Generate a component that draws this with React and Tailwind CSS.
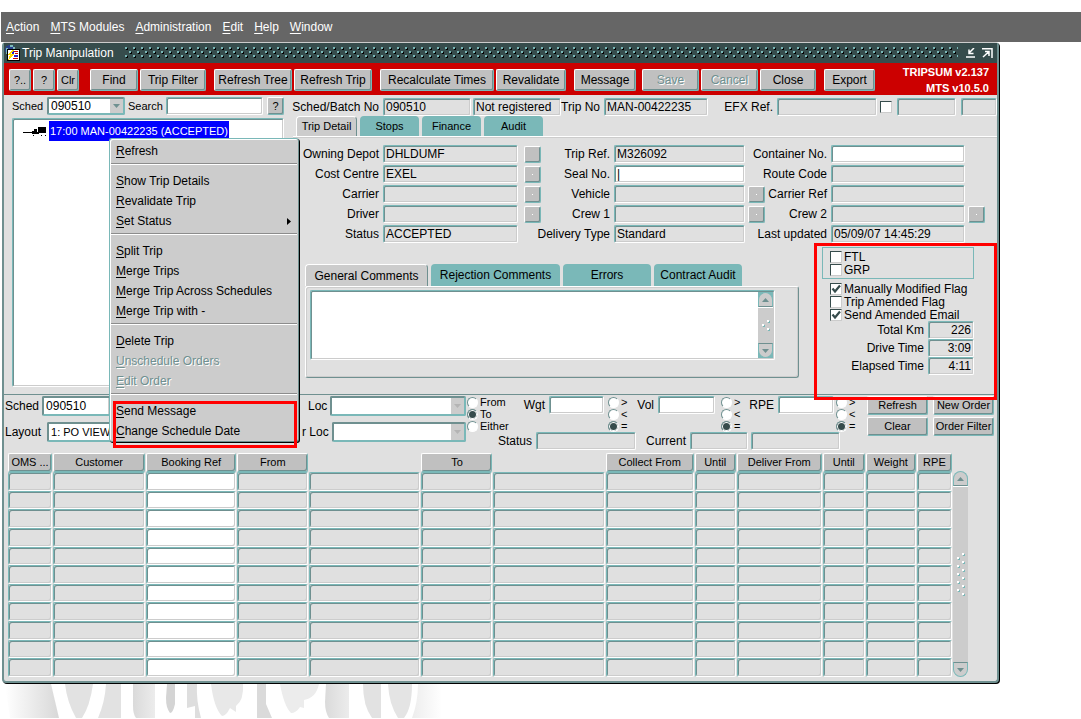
import { useId } from "react"

const MENUS = ["Action", "MTS Modules", "Administration", "Edit", "Help", "Window"]

const TOOLBAR = [
  { title: "?..", style: "w-[22px] text-[11px]" },
  { title: "?", style: "ml-[2px] w-[22px] text-[11px]" },
  { title: "Clr", style: "ml-[2px] w-[22px] text-[11px]" },
  { title: "Find", style: "ml-[11px] w-[48px] text-[12px]" },
  { title: "Trip Filter", style: "ml-[2px] w-[66px] text-[12px]" },
  { title: "Refresh Tree", style: "ml-2 w-[78px] text-[12px]" },
  { title: "Refresh Trip", style: "ml-[2px] w-[78px] text-[12px]" },
  { title: "Recalculate Times", style: "ml-2 w-[114px] text-[12px]" },
  { title: "Revalidate", style: "ml-[2px] w-[70px] text-[12px]" },
  { title: "Message", style: "ml-2 w-[62px] text-[12px]" },
  { title: "Save", style: "ml-[6px] w-[57px] text-[12px]", disabled: true },
  { title: "Cancel", style: "ml-[2px] w-[57px] text-[12px]", disabled: true },
  { title: "Close", style: "ml-[2px] w-[56px] text-[12px]" },
  { title: "Export", style: "ml-2 w-[51px] text-[12px]" }
]

const POPUP = [
  ["Refresh"],
  ["Show Trip Details", "Revalidate Trip", "Set Status"],
  ["Split Trip", "Merge Trips", "Merge Trip Across Schedules", "Merge Trip with -"],
  ["Delete Trip", "Unschedule Orders", "Edit Order"]
]
const POPUP_DISABLED = ["Unschedule Orders", "Edit Order"]

const COLUMNS = [
  { title: "OMS ...", width: "w-[44px]" },
  { title: "Customer", width: "w-[92px]" },
  { title: "Booking Ref", width: "w-[90px]", white: true },
  { title: "From", width: "w-[71px]" },
  { title: "", width: "w-[111px]" },
  { title: "To", width: "w-[71px]" },
  { title: "", width: "w-[111px]" },
  { title: "Collect From", width: "w-[88px]" },
  { title: "Until", width: "w-[41px]" },
  { title: "Deliver From", width: "w-[85px]" },
  { title: "Until", width: "w-[42px]" },
  { title: "Weight", width: "w-[50px]" },
  { title: "RPE", width: "w-[35px]" }
]
const ROWS = [1, 2, 3, 4, 5, 6, 7, 8, 9, 10, 11]

const SUNKEN =
  "rounded-[2px] border border-t-[#7ab8b8] border-l-[#7ab8b8] border-r-white border-b-white shadow-[inset_1px_1px_0_#6f9090,inset_-1px_-1px_0_#cccccc]"
const RAISED =
  "rounded-[2px] border border-t-white border-l-white border-r-[#7ab8b8] border-b-[#7ab8b8] bg-[#c0c0c0] shadow-[inset_-1px_-1px_0_#6f9090]"

const Hotkey = ({ text }) => (
  <>
    <span className="underline underline-offset-2">{text[0]}</span>
    {text.slice(1)}
  </>
)

const Button = ({ children, className = "", disabled }) => (
  <button
    disabled={disabled}
    className={`${RAISED} flex shrink-0 items-center justify-center whitespace-nowrap text-black disabled:text-[#6f9090] disabled:[text-shadow:1px_1px_0_white] ${className}`}
  >
    {children}
  </button>
)

// button that opens a list of values for the field on its left
const LovButton = ({ className = "", blank }) => (
  <Button className={`h-[17px] w-[17px] ${className}`}>
    <span className={`h-px w-px ${blank ? "" : "bg-white"}`}></span>
  </Button>
)

const TextBox = ({ className = "", white, ...props }) => (
  <input
    type="text"
    className={`${SUNKEN} h-[18px] min-w-0 px-[2px] text-[12px] outline-none ${white ? "bg-white" : "bg-[#e0e0e0]"} ${className}`}
    {...props}
  />
)

const Field = ({ label, value, white, align = "" }) => {
  const id = useId()
  return (
    <>
      <label htmlFor={id} className="flex justify-end pr-1 text-[12px] leading-[18px] whitespace-nowrap">
        {label}
      </label>
      <TextBox id={id} white={white} defaultValue={value} className={`w-full ${align}`} />
    </>
  )
}

const SelectBox = ({ id, value, height = "h-5", size = "text-[12px]", faint }) => (
  <div className="relative min-w-0 flex-1">
    <select
      id={id}
      className={`block w-full appearance-none rounded-[2px] border-2 border-t-[#6f9090] border-l-[#6f9090] border-r-[#7ab8b8] border-b-[#7ab8b8] bg-white px-[2px] leading-[14px] outline-none ${height} ${size}`}
    >
      <option>{value}</option>
    </select>
    <span className="pointer-events-none absolute top-[2px] right-[2px] bottom-[2px] flex w-[13px] items-center justify-center bg-[#cccccc]">
      <svg width="7" height="4" viewBox="0 0 7 4">
        <path d="M0 0h7L3.500 4z" fill={faint ? "#b4b4b4" : "#6f9090"} />
      </svg>
    </span>
  </div>
)

const Select = ({ label, className = "", ...props }) => {
  const id = useId()
  return (
    <div className={`flex items-center ${className}`}>
      <label htmlFor={id} className="shrink-0 pr-[3px] text-[12px] whitespace-nowrap">
        {label}
      </label>
      <SelectBox id={id} {...props} />
    </div>
  )
}

const CheckBox = ({ label, checked }) => (
  <label className="flex h-[13px] items-center gap-[2px] text-[12px] whitespace-nowrap">
    <span className="relative h-3 w-3 shrink-0">
      <input
        type="checkbox"
        aria-label={label ? undefined : "EFX"}
        defaultChecked={checked}
        className="peer block h-3 w-3 appearance-none border border-t-[#364c4c] border-l-[#364c4c] border-r-[#cccccc] border-b-[#cccccc] bg-white"
      />
      <svg className="pointer-events-none absolute inset-0 hidden peer-checked:block" width="12" height="12" viewBox="0 0 12 12">
        <path d="M2.500 5.500L5 8.500L10 2.500" fill="none" stroke="#364c4c" strokeWidth="2.200" />
      </svg>
    </span>
    {label}
  </label>
)

const Radios = ({ name, options, checked, className = "" }) => (
  <div className={`flex flex-col ${className}`}>
    {options.map((option) => (
      <label key={option} className="flex h-3 items-center gap-[2px] text-[11px] whitespace-nowrap">
        <input
          type="radio"
          name={name}
          defaultChecked={option === checked}
          className="h-[11px] w-[11px] shrink-0 appearance-none rounded-full border border-t-[#6f9090] border-l-[#6f9090] border-r-white border-b-white bg-white checked:bg-[#364c4c] checked:shadow-[inset_0_0_0_1px_white]"
        />
        {option}
      </label>
    ))}
  </div>
)

const Tab = ({ title, active, className }) => (
  <button
    className={`shrink-0 rounded-t-[4px] whitespace-nowrap ${
      active ? "border-t border-r border-l border-t-white border-r-[#6f9090] border-l-white bg-[#cccccc]" : "bg-[#7ab8b8]"
    } ${className}`}
  >
    {title}
  </button>
)

const Arrow = ({ down }) => (
  <div
    className={`flex h-[15px] items-center justify-center border border-[#7ab8b8] bg-[#cccccc] ${
      down ? "rounded-b-full border-t-[#6f9090]" : "rounded-t-full border-b-[#6f9090]"
    }`}
  >
    <svg width="7" height="4" viewBox="0 0 7 4">
      <path d={down ? "M0 0h7L3.500 4z" : "M0 4h7L3.500 0z"} fill="#6f9090" />
    </svg>
  </div>
)

const ScrollBar = ({ dots, className }) => (
  <div className={`flex shrink-0 flex-col ${className}`}>
    <Arrow />
    <div className="flex flex-1 items-center justify-center border-t border-t-white bg-[#cccccc]">
      <svg width="8" height={dots * 4} shapeRendering="crispEdges">
        {Array.from({ length: dots }, (_, i) => (
          <g key={i}>
            <rect x={i % 2 ? 1 : 6} y={i * 4 + 1} width="2" height="2" fill="#7ab8b8" />
            <rect x={i % 2 ? 0 : 5} y={i * 4} width="2" height="2" fill="white" />
          </g>
        ))}
      </svg>
    </div>
    <Arrow down />
  </div>
)

const TitleBar = () => (
  <div className="flex h-5 items-center bg-[#364c4c] pr-1 text-white">
    <svg width="17" height="18" viewBox="0 0 17 18" shapeRendering="crispEdges">
      <circle cx="6" cy="6" r="5" fill="#27408b" />
      <path d="M2 4h2v1h2v2H4v3H2zM6 1h3v2H6zM9 3h2v2H9z" fill="#7ab8b8" />
      <rect x="3" y="5" width="12" height="11" fill="white" />
      <path d="M3 5h12v1H3zM3 5h1v11H3zM3 16h13v1H3zM15 5h1v12h-1z" fill="black" />
      <path d="M10 7h4v1h-4zM11 9h3v1h-3z" fill="#cc0000" />
      <path d="M8 7h2v4H8z" fill="#2222cc" />
      <path d="M10 11h4v2h-4z" fill="#2222cc" />
      <path d="M9 14h5v1H9z" fill="#cc0000" />
      <path d="M8 6L4 11h2l-2 5 6-6H7l3-4z" fill="#ffdd00" />
    </svg>
    <span className="ml-px text-[12px] whitespace-nowrap">Trip Manipulation</span>
    <svg className="ml-[11px] h-3 min-w-0 flex-1" shapeRendering="crispEdges">
      <defs>
        <pattern id="grip" width="8" height="8" patternUnits="userSpaceOnUse">
          <path d="M1 1h2v2H1zM5 5h2v2H5z" fill="black" />
          <path d="M0 0h2v1H1v1H0zM4 4h2v1H5v1H4z" fill="#7ab8b8" />
          <path d="M1 1h1v1H1zM5 5h1v1H5z" fill="#7ab8b8" />
        </pattern>
      </defs>
      <rect width="100%" height="11" fill="url(#grip)" />
    </svg>
    <button aria-label="Minimise" className="ml-2">
      <svg width="10" height="10" viewBox="0 0 10 10">
        <path d="M0 9H9M8 0L3 5M3 1.500V5.500H7.500" fill="none" stroke="white" strokeWidth="1.500" />
      </svg>
    </button>
    <button aria-label="Maximise" className="ml-[6px]">
      <svg width="11" height="10" viewBox="0 0 11 10">
        <path d="M0 0.800H10V10M1 9L6.500 4M3 3.500H7V8" fill="none" stroke="white" strokeWidth="1.500" />
      </svg>
    </button>
  </div>
)

const Popup = () => (
  <div className="absolute top-[19px] left-[96px] z-10 w-[190px] rounded-[3px] border border-t-[#7ab8b8] border-l-[#7ab8b8] border-r-[#6f9090] border-b-[#6f9090] bg-[#cccccc] px-px pt-[2px] text-[12px] shadow-[inset_1px_1px_0_white,1px_1px_0_black]">
    {POPUP.map((group, index) => (
      <div key={index}>
        {group.map((item) => (
          <button
            key={item}
            disabled={POPUP_DISABLED.includes(item)}
            className="flex h-5 w-full items-center justify-between pr-[6px] pl-[5px] disabled:text-[#6f9090] disabled:[text-shadow:1px_1px_0_white]"
          >
            <span>
              <Hotkey text={item} />
            </span>
            {item === "Set Status" && (
              <svg width="4" height="7" viewBox="0 0 4 7">
                <path d="M0 0L4 3.500L0 7z" />
              </svg>
            )}
          </button>
        ))}
        <div className="h-[10px] pt-[2px]">
          <div className="h-[2px] border-t border-b border-t-[#8c8c8c] border-b-white"></div>
        </div>
      </div>
    ))}
    <div className="relative">
      {["Send Message", "Change Schedule Date"].map((item) => (
        <button key={item} className="flex h-5 w-full items-center pl-[5px]">
          <span>
            <Hotkey text={item} />
          </span>
        </button>
      ))}
      <div className="pointer-events-none absolute top-0 right-0 -bottom-[7px] left-[2px] border-[3px] border-[#ff0000]"></div>
    </div>
  </div>
)

const Tree = () => (
  <div className="w-[289px] shrink-0 pt-[2px] pl-[7px]">
    <div className="flex items-center text-[11px] leading-[18px]">
      <label htmlFor="sched" className="w-[36px] pl-px">Sched</label>
      <div className="flex w-[78px]">
        <SelectBox id="sched" value="090510" height="h-[18px]" />
      </div>
      <label htmlFor="search" className="w-[41px] pl-[3px]">Search</label>
      <TextBox id="search" white className="w-[97px]" />
      <Button className="ml-1 h-[18px] w-[17px]">?</Button>
    </div>
    <div className={`${SUNKEN} relative mt-[3px] mr-[9px] ml-px h-[269px] bg-white pt-[2px]`}>
      <div className="flex items-center pl-[10px]">
        <svg width="24" height="11" viewBox="0 0 24 11" shapeRendering="crispEdges">
          <path d="M0 6h9v1H0zM9 5h4v3H9zM11 3h3v3h-3zM15 1h8v6h-8zM13 6h3v2h-3z" />
          <path d="M10 9h1v1h-1zM18 9h1v1h-1zM22 9h1v1h-1z" />
        </svg>
        <span className="ml-[2px] bg-[#0000ff] px-px text-[11px] leading-[20px] whitespace-nowrap text-white">
          17:00 MAN-00422235 (ACCEPTED)
        </span>
      </div>
      <Popup />
    </div>
  </div>
)

const TripDetail = () => (
  <div className="grid auto-rows-[18px] grid-cols-[90px_135fr_23px_73px_131fr_20px_66px_134fr_32px] items-center gap-y-[2px] pt-[7px]">
    <Field label="Owning Depot" value="DHLDUMF" />
    <LovButton blank className="justify-self-end" />
    <Field label="Trip Ref." value="M326092" />
    <span></span>
    <Field label="Container No." white />
    <span></span>

    <Field label="Cost Centre" value="EXEL" />
    <LovButton className="justify-self-end" />
    <Field label="Seal No." value="|" white />
    <span></span>
    <Field label="Route Code" />
    <span></span>

    <Field label="Carrier" />
    <LovButton className="justify-self-end" />
    <Field label="Vehicle" />
    <LovButton className="justify-self-end" />
    <Field label="Carrier Ref" />
    <span></span>

    <Field label="Driver" />
    <LovButton className="justify-self-end" />
    <Field label="Crew 1" />
    <LovButton className="justify-self-end" />
    <Field label="Crew 2" />
    <LovButton className="ml-[3px]" />

    <Field label="Status" value="ACCEPTED" />
    <span></span>
    <Field label="Delivery Type" value="Standard" />
    <span></span>
    <Field label="Last updated" value="05/09/07 14:45:29" />
    <span></span>
  </div>
)

const Comments = () => (
  <div className="mr-[15px] ml-3 min-w-0 flex-1 pt-[21px] text-[12px]">
    <div className="flex h-[22px] gap-[3px]">
      <Tab title="General Comments" active className="w-[123px]" />
      <Tab title="Rejection Comments" className="w-[129px]" />
      <Tab title="Errors" className="w-[88px]" />
      <Tab title="Contract Audit" className="w-[88px]" />
    </div>
    <div className="rounded-[3px] border border-t-white border-l-white border-r-[#6f9090] border-b-[#6f9090] px-1 pt-[3px] pb-[17px] shadow-[inset_1px_1px_0_#cccccc,inset_-1px_-1px_0_#cccccc]">
      <div className={`${SUNKEN} mr-[19px] flex bg-white p-px`}>
        <textarea aria-label="General Comments" className="h-[66px] min-w-0 flex-1 resize-none bg-transparent outline-none" />
        <ScrollBar dots={3} className="w-[15px] bg-[#7ab8b8]" />
      </div>
    </div>
  </div>
)

const Flags = () => (
  <div className="relative w-[183px] shrink-0 pt-1 pr-[23px] pl-2">
    <div className="border border-[#7ab8b8] py-[2px] pl-[7px]">
      <CheckBox label="FTL" />
      <CheckBox label="GRP" />
    </div>
    <div className="pt-[3px] pl-2">
      <CheckBox label="Manually Modified Flag" checked />
      <CheckBox label="Trip Amended Flag" />
      <CheckBox label="Send Amended Email" checked />
    </div>
    <div className="grid grid-cols-[1fr_46px] items-center">
      <Field label="Total Km" value="226" align="text-right" />
      <Field label="Drive Time" value="3:09" align="text-right" />
      <Field label="Elapsed Time" value="4:11" align="text-right" />
    </div>
    <div className="pointer-events-none absolute inset-x-0 top-0 -bottom-[22px] z-10 border-[3px] border-[#ff0000]"></div>
  </div>
)

const COMPARE = [">", "<", "="]

const OrderSearch = () => (
  <div className="flex border-t border-t-[#6f9090] pt-px">
    <div className="flex w-[298px] shrink-0 flex-col items-start gap-[6px] pl-px">
      <Select label="Sched" value="090510" className="w-[118px]" />
      <Select label="Layout" value="1: PO VIEW" size="text-[11px]" className="w-[240px] gap-[3px]" />
    </div>
    <div className="flex min-w-0 flex-1 flex-col gap-[6px]">
      <Select label="Loc" faint className="pl-[6px]" />
      <Select label="r Loc" faint />
    </div>
    <Radios name="loc" options={["From", "To", "Either"]} checked="To" className="w-[34px] pl-px" />
    <div className="w-[367px] shrink-0">
      <div className="grid grid-cols-[49px_55px_33px_21px_57px_36px_27px_56px_33px] items-start">
        <Field label="Wgt" white />
        <Radios name="wgt" options={COMPARE} checked="=" className="pl-1" />
        <Field label="Vol" white />
        <Radios name="vol" options={COMPARE} checked="=" className="pl-[6px]" />
        <Field label="RPE" white />
        <Radios name="rpe" options={COMPARE} checked="=" className="pl-[2px]" />
      </div>
      <div className="grid grid-cols-[36px_100px_54px_58px_3px_89px] items-center">
        <Field label="Status" />
        <Field label="Current" />
        <span></span>
        <TextBox aria-label="Current description" />
      </div>
    </div>
    <div className="mr-[3px] grid auto-rows-[19px] grid-cols-[61px_61px] gap-x-[5px] gap-y-[2px] text-[11px]">
      <Button>Refresh</Button>
      <Button>New Order</Button>
      <Button>Clear</Button>
      <Button>Order Filter</Button>
    </div>
  </div>
)

const Orders = () => (
  <div className="flex pt-[3px] pr-[29px] pb-1 pl-[3px]">
    <table className="h-[224px] min-w-0 flex-1 table-fixed border-separate border-spacing-x-px border-spacing-y-0 text-[11px]">
      <thead>
        <tr>
          {COLUMNS.map((column, index) => (
            <th
              key={index}
              className={`h-[19px] overflow-hidden p-0 font-normal whitespace-nowrap ${column.width} ${column.title ? RAISED : ""}`}
            >
              {column.title}
            </th>
          ))}
        </tr>
      </thead>
      <tbody>
        {ROWS.map((row) => (
          <tr key={row}>
            {COLUMNS.map((column, index) => (
              <td key={index} className={`${SUNKEN} p-0 ${column.white ? "bg-white" : ""}`}>
                <input
                  type="text"
                  aria-label={`${column.title} ${row}`}
                  className="block h-4 w-full bg-transparent px-[2px] outline-none"
                />
              </td>
            ))}
          </tr>
        ))}
      </tbody>
    </table>
    <ScrollBar dots={11} className="mt-[18px] w-[15px]" />
  </div>
)

// bottom edge of the wordmark that sits behind the window
const Wordmark = () => (
  <svg className="block" width="450" height="34" viewBox="0 0 450 34">
    <defs>
      <linearGradient id="fadeIn">
        <stop offset="0" stopColor="white" />
        <stop offset="1" stopColor="#d8d8d8" />
      </linearGradient>
      <linearGradient id="fadeOut">
        <stop offset="0" stopColor="#ededed" />
        <stop offset="1" stopColor="white" />
      </linearGradient>
      <linearGradient id="shade">
        <stop offset="0" stopColor="#dadada" />
        <stop offset="1" stopColor="#ececec" />
      </linearGradient>
    </defs>
    <path d="M5 0H51L59 34H10z" fill="url(#fadeIn)" />
    <path d="M65 0H93Q90 22 82 34H76Q67 18 65 0z" fill="#e2e2e2" />
    <path d="M106 0H121V34H98Q105 18 106 0z" fill="#e2e2e2" />
    <path d="M133 0H155V34H136Q133 30 133 22z" fill="url(#shade)" />
    <path d="M167 0H175V20Q173 29 170 29Q166 24 166 14z" fill="#d4d4d4" />
    <path d="M187 0H197Q196 16 201 34H195V22L187 24z" fill="#dedede" />
    <path d="M211 0H243Q244 16 236 22V28L230 24Q226 32 222 32Q214 24 211 0z" fill="#e8e8e8" />
    <path d="M257 0H266V20Q269 27 272 34H257z" fill="#dadada" />
    <path d="M280 0H319Q316 14 304 16V24L300 23Q296 29 291 29Q284 22 280 0z" fill="#ececec" />
    <path d="M326 0H349V34H329Q325 28 325 18z" fill="url(#shade)" />
    <path d="M363 0H381V34H372Q363 22 363 0z" fill="#e2e2e2" />
    <path d="M388 0H412Q412 24 404 34H398Q389 20 388 0z" fill="#e4e4e4" />
    <path d="M418 0H442V34H412Q418 18 418 0z" fill="url(#fadeOut)" />
  </svg>
)

const App = () => {
  return (
    <div className="min-h-screen bg-white pt-3 font-['Liberation_Sans',Arial,sans-serif] text-black">
      <div className="ml-px flex h-[30px] items-center gap-[11px] bg-[#666666] pl-[5px] text-[12px] text-white">
        {MENUS.map((menu) => (
          <button key={menu}>
            <Hotkey text={menu} />
          </button>
        ))}
      </div>

      <div className="mr-[82px] ml-[2px] rounded-[4px] border-2 border-t border-[#6f9090] border-t-[#cccccc] bg-[#e0e0e0] shadow-[1px_1px_0_black]">
        <TitleBar />

        <div className="flex h-8 bg-[#cc0000] pt-[6px] pr-2 pl-[5px]">
          {TOOLBAR.map((button) => (
            <Button key={button.title} disabled={button.disabled} className={`h-[22px] ${button.style}`}>
              {button.title}
            </Button>
          ))}
          <div className="-mt-[5px] flex-1 text-right text-[11px] leading-4 font-bold whitespace-nowrap text-white">
            <p>TRIPSUM v2.137</p>
            <p>MTS v10.5.0</p>
          </div>
        </div>

        <div className="flex">
          <Tree />
          <div className="min-w-0 flex-1">
            <div className="grid grid-cols-[90px_88fr_2px_88fr_43px_104fr_69px_100fr_20px_59fr_5px_36fr] items-center pt-[3px]">
              <Field label="Sched/Batch No" value="090510" />
              <span></span>
              <TextBox aria-label="Registration" defaultValue="Not registered" />
              <Field label="Trip No" value="MAN-00422235" />
              <Field label="EFX Ref." />
              <span className="pl-[3px]">
                <CheckBox />
              </span>
              <TextBox aria-label="EFX status" />
              <span></span>
              <TextBox aria-label="EFX code" />
            </div>
            <div className="flex h-5 gap-[3px] pl-[3px] text-[11px]">
              <Tab title="Trip Detail" active className="w-[61px]" />
              <Tab title="Stops" className="w-[59px]" />
              <Tab title="Finance" className="w-[59px]" />
              <Tab title="Audit" className="w-[59px]" />
            </div>
            <div className="h-[2px] border-t border-b border-t-white border-b-[#cccccc]"></div>
            <TripDetail />
            <div className="flex">
              <Comments />
              <Flags />
            </div>
          </div>
        </div>

        <div className="pt-[7px]">
          <OrderSearch />
        </div>
        <Orders />
      </div>

      <div className="overflow-hidden pt-px">
        <Wordmark />
      </div>
    </div>
  )
}

export default App
